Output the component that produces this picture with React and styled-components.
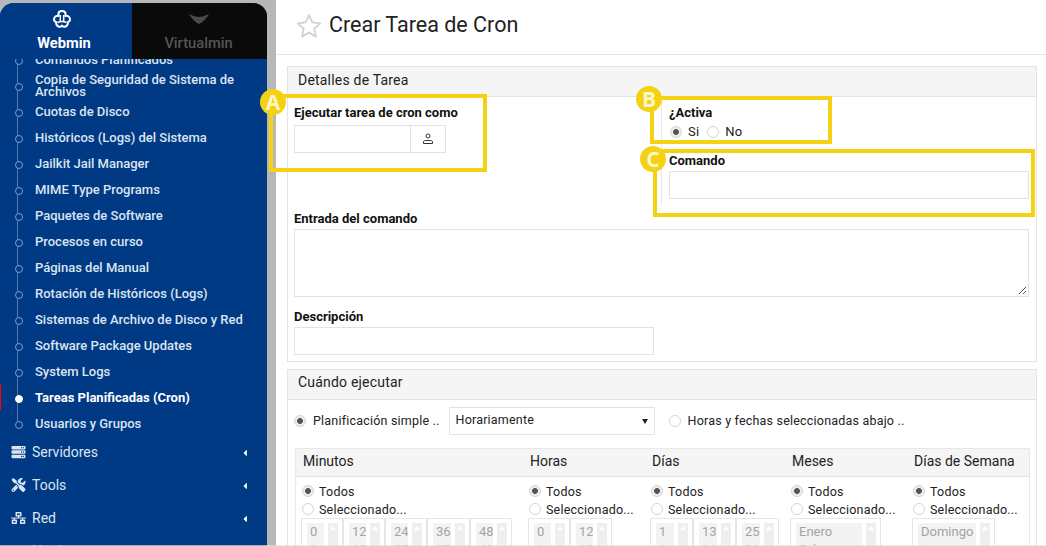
import React from 'react';
import styled, { createGlobalStyle } from 'styled-components';
import { FaServer, FaTools, FaNetworkWired, FaCaretLeft, FaHdd } from 'react-icons/fa';

const Global = createGlobalStyle`
  html, body { margin: 0; padding: 0; height: 546px; overflow: hidden; background: #fff; }
  * { box-sizing: border-box; }
  #root { font-family: Roboto, "Liberation Sans", sans-serif; }
`;

const Page = styled.div`
  position: relative;
  display: flex;
  width: 1046px;
  height: 546px;
  overflow: hidden;
  background: #b7b7b7;
  padding-top: 3px;
`;
const Sidebar = styled.aside`
  width: 267px;
  flex: none;
  height: 543px;
  display: flex;
  flex-direction: column;
  background: #003a85;
  border-radius: 14px 14px 0 0;
  overflow: hidden;
`;
const Tabs = styled.div`
  display: flex;
  height: 56px;
  flex: none;
`;
const Tab = styled.div`
  width: ${p => (p.$active ? 132 : 135)}px;
  background: ${p => (p.$active ? '#003a85' : '#0a0a0a')};
  color: ${p => (p.$active ? '#fff' : '#555')};
  font-size: 14.7px;
  font-weight: ${p => (p.$active ? 700 : 500)};
  display: flex;
  flex-direction: column;
  align-items: center;
  padding-top: 7px;
  padding-right: ${p => (p.$active ? 4 : 2)}px;
  svg { display: block; height: 18px; margin-right: ${p => (p.$active ? 4 : 0)}px; }
  span { margin-top: 7px; line-height: 16px; }
`;
const Nav = styled.div`
  flex: 1;
  overflow: hidden;
`;
const SubList = styled.ul`
  position: relative;
  list-style: none;
  margin: -13px 0 0;
  padding: 0;
  &::before {
    content: '';
    position: absolute;
    left: 17px;
    top: 0;
    bottom: 10px;
    width: 1px;
    background: #4f78ad;
  }
`;
const SubItem = styled.li`
  position: relative;
  height: 26px;
  display: flex;
  align-items: center;
  padding: 2px 20px 0 35px;
  color: ${p => (p.$active ? '#fff' : '#dbe5f1')};
  font-size: 13px;
  font-weight: ${p => (p.$active ? 700 : 500)};
  line-height: 12px;
  box-shadow: ${p => (p.$active ? 'inset 1px 0 0 #f00' : 'none')};
  &::before {
    content: '';
    position: absolute;
    left: 15px;
    top: 11px;
    width: 6px;
    height: 6px;
    border-radius: 50%;
    border: 1px solid ${p => (p.$active ? '#fff' : '#7d9cc6')};
    background: ${p => (p.$active ? '#fff' : '#003a85')};
  }
`;
const Group = styled.div`
  height: 33px;
  display: flex;
  align-items: center;
  padding: 0 18px 2px 11px;
  color: #dbe5f1;
  font-size: 14px;
  font-weight: 400;
  svg.lead { width: 15px; height: 14px; margin-right: 6px; flex: none; }
  span { flex: 1; }
  svg.caret { width: 8px; height: 10px; margin-top: 3px; color: #fff; }
`;

const Main = styled.main`
  margin-left: 9px;
  flex: 1;
  margin-top: -3px;
  height: 546px;
  background: #fff;
  display: flex;
  flex-direction: column;
`;
const Header = styled.header`
  height: 55px;
  flex: none;
  display: flex;
  align-items: center;
  padding-left: 20px;
  padding-bottom: 5px;
  gap: 7px;
  border-bottom: 1px solid #e6e6e6;
  h1 { margin: 0; font-size: 21.5px; font-weight: 400; color: #222; }
  svg { margin-top: 2px; }
`;
const Panel = styled.section`
  margin: ${p => p.$top}px 10px 0 11px;
  border: 1px solid #e4e4e4;
  flex: ${p => (p.$fill ? '1' : 'none')};
  ${p => (p.$fill ? 'border-bottom: 0;' : '')}
  overflow: hidden;
`;
const PanelHead = styled.div`
  height: 30px;
  background: #f5f5f5;
  border-bottom: 1px solid #e4e4e4;
  display: flex;
  align-items: center;
  padding: 0 0 ${p => p.$lift}px 10px;
  font-size: 14px;
  letter-spacing: 0.2px;
  color: #222;
`;
const FormBody = styled.div`
  display: grid;
  grid-template-columns: 367px 1fr;
  padding: 0 6px 6px;
`;
const Cell = styled.div`
  ${p => (p.$full ? 'grid-column: 1 / -1;' : '')}
`;
const SideCell = styled.div`
  border-left: 1px solid #e8e8e8;
  padding-left: 7px;
  height: 108px;
`;
const Label = styled.label`
  display: block;
  font-size: 13px;
  font-weight: 700;
  color: #111;
  line-height: 14px;
  padding-top: ${p => p.$top ?? 9}px;
  margin-bottom: ${p => p.$bottom ?? 4}px;
`;
const Field = styled.div`
  height: ${p => p.$h}px;
  width: ${p => p.$w};
  border: 1px solid #e2e2e2;
  background: #fff;
  position: relative;
`;
const Picker = styled.div`
  display: flex;
  width: 152px;
  height: 28px;
  border: 1px solid #e2e2e2;
  div { flex: 1; }
  button {
    width: 35px;
    border: 0;
    border-left: 1px solid #e2e2e2;
    background: #fff;
    padding: 0;
    display: flex;
    align-items: center;
    justify-content: center;
  }
`;
const Grip = styled.svg`
  position: absolute;
  right: 1px;
  bottom: 1px;
`;
const RadioDot = styled.span`
  display: inline-block;
  flex: none;
  width: 12px;
  height: 12px;
  border-radius: 50%;
  border: 1px solid #d4d4d4;
  background: ${p => (p.$on ? 'radial-gradient(circle, #555 0 2.6px, #eee 3.2px)' : '#fff')};
`;
const Options = styled.div`
  display: flex;
  align-items: center;
  font-size: 13px;
  color: #222;
  line-height: 18px;
  gap: 6px;
  margin: -1px 0 0 1px;
  span.t { margin-right: 2px; letter-spacing: 0.2px; }
`;
const Schedule = styled.div`
  display: flex;
  align-items: center;
  height: 36px;
  margin-top: 3px;
  padding-left: 6px;
  font-size: 12.5px;
  letter-spacing: 0.2px;
  color: #222;
`;
const ScheduleText = styled.span`
  margin-left: ${p => p.$gap}px;
  margin-top: -1px;
`;
const SelectBox = styled.div`
  width: 206px;
  height: 28px;
  margin: 0 14px 0 9px;
  border: 1px solid #e2e2e2;
  display: flex;
  justify-content: space-between;
  padding: 0 6px 0 6px;
  align-items: center;
  span { margin-bottom: 4px; }
`;
const Table = styled.div`
  margin: 9px 6px 0 7px;
  border: 1px solid #e8e8e8;
  border-bottom: 0;
`;
const Cols = styled.div`
  display: grid;
  grid-template-columns: 227px 122px 140px 122px 122px;
`;
const ColHead = styled(Cols)`
  height: 28px;
  background: #f5f5f5;
  border-bottom: 1px solid #e4e4e4;
  align-items: center;
  font-size: 14px;
  color: #222;
  padding-bottom: 4px;
  div { padding-left: 7px; }
`;
const Col = styled.div`
  padding: 5px 0 0 6px;
`;
const ChoiceRow = styled.div`
  display: flex;
  align-items: center;
  gap: 5px;
  height: 18px;
  font-size: 12.5px;
  letter-spacing: 0.2px;
  color: #222;
  white-space: nowrap;
`;
const ListRow = styled.div`
  display: flex;
  margin-left: -1px;
`;
const ListBox = styled.div`
  width: ${p => p.$w}px;
  height: 60px;
  flex: none;
  border: 1px solid #e6e6e6;
  padding: 4px 4px 4px 5px;
  display: flex;
  gap: 4px;
  background: #fff;
`;
const ListText = styled.div`
  flex: 1;
  min-width: 0;
  background: #f3f3f3;
  color: #a3a3a3;
  font-size: 13px;
  line-height: 18px;
  padding: 0 0 0 3px;
  white-space: nowrap;
  overflow: hidden;
`;
const ListBar = styled.div`
  width: 10px;
  background: #efefef;
  display: flex;
  justify-content: center;
  padding-top: 3px;
  &::before {
    content: '';
    width: 0;
    height: 0;
    border-left: 3.5px solid transparent;
    border-right: 3.5px solid transparent;
    border-bottom: 4px solid #fff;
  }
`;
const Note = styled.div`
  position: absolute;
  left: ${p => p.$x}px;
  top: ${p => p.$y}px;
  width: ${p => p.$w}px;
  height: ${p => p.$h}px;
  border: 4px solid #f4d113;
  pointer-events: none;
`;
const Badge = styled.div`
  position: absolute;
  left: ${p => p.$x - 13}px;
  top: ${p => p.$y - 13}px;
  width: 26px;
  height: 26px;
  border-radius: 50%;
  background: #f4d113;
  color: #fdf6c8;
  font-family: "Open Sans", Roboto, sans-serif;
  font-size: 21px;
  font-weight: 700;
  display: flex;
  align-items: center;
  justify-content: center;
`;
const BottomLine = styled.div`
  position: absolute;
  left: 0;
  right: 0;
  bottom: 0;
  height: 1px;
  background: rgba(225, 225, 225, 0.7);
`;

const items = [
  'Comandos Planificados', 'Copia de Seguridad de Sistema de Archivos', 'Cuotas de Disco',
  'Históricos (Logs) del Sistema', 'Jailkit Jail Manager', 'MIME Type Programs',
  'Paquetes de Software', 'Procesos en curso', 'Páginas del Manual',
  'Rotación de Históricos (Logs)', 'Sistemas de Archivo de Disco y Red',
  'Software Package Updates', 'System Logs', 'Tareas Planificadas (Cron)', 'Usuarios y Grupos',
];

const columns = [
  { title: 'Minutos', lists: [[42, '0', '1'], [42, '12', '13'], [42, '24', '25'], [43, '36', '37'], [42, '48', '49']] },
  { title: 'Horas', lists: [[42, '0', '1'], [42, '12', '13']] },
  { title: 'Días', lists: [[43, '1', '2'], [43, '13', '14'], [43, '25', '26']] },
  { title: 'Meses', lists: [[91, 'Enero', 'Febrero']] },
  { title: 'Días de Semana', lists: [[83, 'Domingo', 'Lunes']] },
];

const WebminLogo = () => (
  <svg width="18" height="18" viewBox="0 0 18 18" fill="none" stroke="#fff" strokeWidth="2" strokeLinejoin="round">
    <path d="M9 1c2.200 0 3.600 1.400 3.600 3.200 0 .7-.1 1.200-.3 1.800 2.400-.6 4.700.8 4.700 3.200 0 1.600-1 2.600-2.300 3 .5 2-.8 4.300-3 4.600-1.200.2-2-.4-2.700-1.200-.7.8-1.500 1.400-2.700 1.200-2.200-.3-3.500-2.600-3-4.600C2 11.800 1 10.800 1 9.200 1 6.800 3.300 5.400 5.700 6c-.2-.6-.3-1.100-.3-1.800C5.400 2.400 6.800 1 9 1z" />
    <path d="M7.300 5v7M10.700 5v7M4.500 12.500c3-1.300 6-1.300 9 0" strokeWidth="1.500" />
  </svg>
);

const Swoosh = () => (
  <svg width="20" height="18" viewBox="0 0 20 18" fill="#4a4a4a">
    <path d="M0 4c4 2 7 3 10 3s6-1 10-3c-2 4-6 8-10 10C6 12 2 8 0 4z" />
  </svg>
);

const UserIcon = () => (
  <svg width="12" height="12" viewBox="0 0 12 12" fill="none" stroke="#333" strokeWidth="1">
    <circle cx="6" cy="3" r="2" />
    <path d="M1.500 10.500V9c0-1 .8-1.500 1.800-1.500h5.400c1 0 1.800.5 1.800 1.500v1.500z" />
  </svg>
);

const StarIcon = () => (
  <svg width="26" height="26" viewBox="0 0 26 26" fill="none" stroke="#d2d2d2" strokeWidth="1.800" strokeLinejoin="round">
    <path d="M13 2l3.300 7.400 8 .9-6 5.400 1.700 7.900L13 19.600l-7 4 1.700-7.900-6-5.400 8-.9z" />
  </svg>
);

const Caret = () => (
  <svg width="6" height="5" viewBox="0 0 6 5" fill="#222"><path d="M0 0h6L3 5z" /></svg>
);

export default function App() {
  return (
    <Page>
      <Global />
      <Sidebar>
        <Tabs>
          <Tab $active><WebminLogo /><span>Webmin</span></Tab>
          <Tab><Swoosh /><span>Virtualmin</span></Tab>
        </Tabs>
        <Nav>
          <SubList>
            {items.map(t => (
              <SubItem key={t} $active={t.startsWith('Tareas')}>{t}</SubItem>
            ))}
          </SubList>
          <Group><FaServer className="lead" /><span>Servidores</span><FaCaretLeft className="caret" /></Group>
          <Group><FaTools className="lead" /><span>Tools</span><FaCaretLeft className="caret" /></Group>
          <Group><FaNetworkWired className="lead" /><span>Red</span><FaCaretLeft className="caret" /></Group>
          <Group><FaHdd className="lead" /><span>Hardware</span><FaCaretLeft className="caret" /></Group>
        </Nav>
      </Sidebar>
      <Main>
        <Header>
          <StarIcon />
          <h1>Crear Tarea de Cron</h1>
        </Header>
        <Panel $top={11}>
          <PanelHead $lift={3}>Detalles de Tarea</PanelHead>
          <FormBody>
            <Cell>
              <Label $bottom={5}>Ejecutar tarea de cron como</Label>
              <Picker><div /><button type="button"><UserIcon /></button></Picker>
            </Cell>
            <SideCell>
              <Label>¿Activa</Label>
              <Options>
                <RadioDot $on /><span className="t">Si</span>
                <RadioDot /><span className="t">No</span>
              </Options>
              <Label $top={13} $bottom={3}>Comando</Label>
              <Field $h={28} $w="360px" />
            </SideCell>
            <Cell $full>
              <Label $top={7} $bottom={3}>Entrada del comando</Label>
              <Field $h={68} $w="735px">
                <Grip width="9" height="9" viewBox="0 0 9 9" stroke="#555" strokeWidth="1">
                  <path d="M1 8l7-7M5 8l3-3" />
                </Grip>
              </Field>
            </Cell>
            <Cell $full>
              <Label $top={13} $bottom={3}>Descripción</Label>
              <Field $h={28} $w="360px" />
            </Cell>
          </FormBody>
        </Panel>
        <Panel $top={7} $fill>
          <PanelHead $lift={5}>Cuándo ejecutar</PanelHead>
          <Schedule>
            <RadioDot $on />
            <ScheduleText $gap={7}>Planificación simple ..</ScheduleText>
            <SelectBox>
              <span>Horariamente</span>
              <Caret />
            </SelectBox>
            <RadioDot />
            <ScheduleText $gap={7}>Horas y fechas seleccionadas abajo ..</ScheduleText>
          </Schedule>
          <Table>
            <ColHead>
              {columns.map(c => <div key={c.title}>{c.title}</div>)}
            </ColHead>
            <Cols>
              {columns.map(c => (
                <Col key={c.title}>
                  <ChoiceRow><RadioDot $on />Todos</ChoiceRow>
                  <ChoiceRow><RadioDot />Seleccionado...</ChoiceRow>
                  <ListRow>
                    {c.lists.map(([w, a, b]) => (
                      <ListBox key={a} $w={w}>
                        <ListText>{a}<br />{b}</ListText>
                        <ListBar />
                      </ListBox>
                    ))}
                  </ListRow>
                </Col>
              ))}
            </Cols>
          </Table>
        </Panel>
      </Main>
      <Note $x={269} $y={94} $w={218} $h={78} />
      <Note $x={650} $y={96} $w={182} $h={48} />
      <Note $x={653} $y={149} $w={382} $h={68} />
      <Badge $x={273} $y={102}>A</Badge>
      <Badge $x={649} $y={99}>B</Badge>
      <Badge $x={653} $y={159}>C</Badge>
      <BottomLine />
    </Page>
  );
}
